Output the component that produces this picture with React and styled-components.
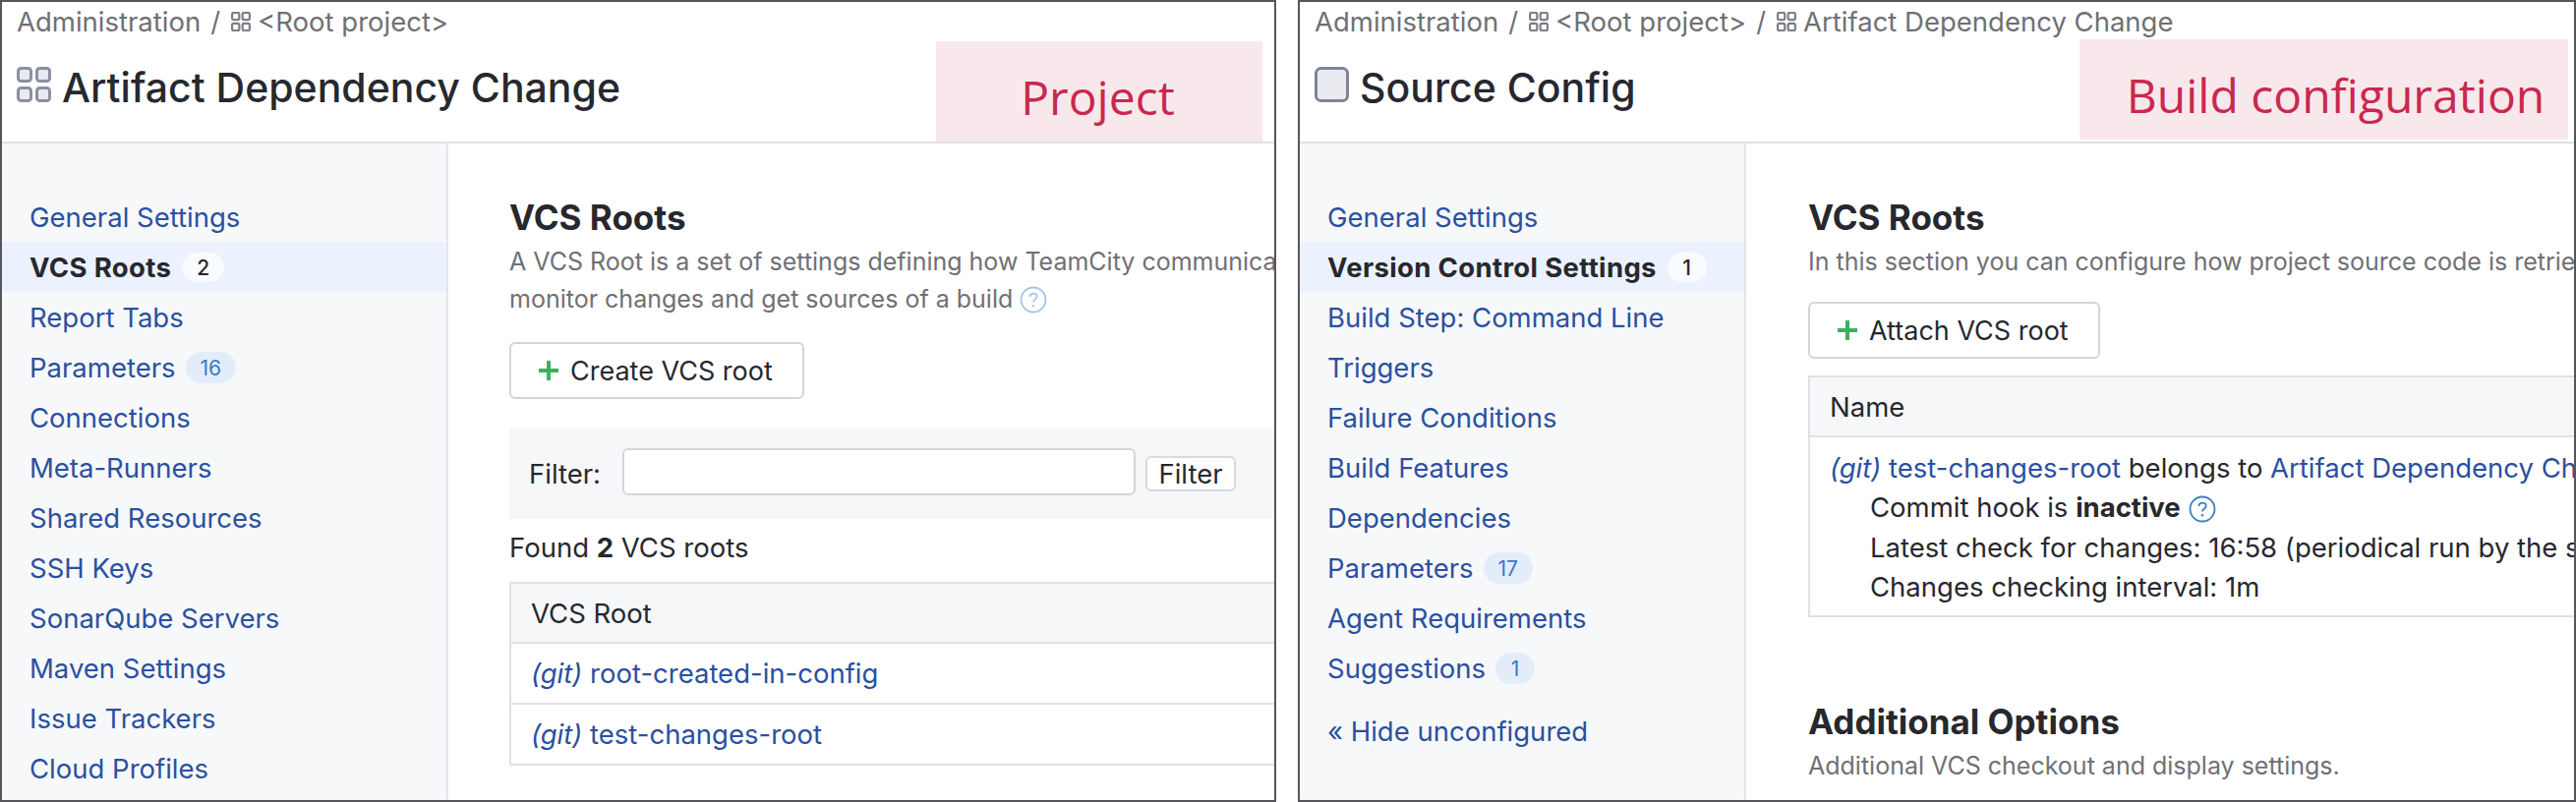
import React from 'react';
import styled, { createGlobalStyle } from 'styled-components';

const GlobalStyle = createGlobalStyle`
    html, body {
        margin: 0;
        padding: 0;
        background: #fff;
    }
    body {
        font-family: Inter, "Liberation Sans", sans-serif;
        font-size: 27.5px;
        color: #27282e;
    }
`;

const Page = styled.div`
    display: flex;
    gap: 22px;
    width: 2620px;
    height: 816px;
    overflow: hidden;
`;

const Frame = styled.section`
    display: flex;
    flex-direction: column;
    box-sizing: border-box;
    width: ${({ $width }) => $width}px;
    height: 816px;
    border: 2px solid #55565a;
    overflow: hidden;
    white-space: nowrap;
`;

const Header = styled.header`
    position: relative;
    box-sizing: border-box;
    flex: none;
    height: 144px;
    padding: 0 15px;
    border-bottom: 2px solid #e0e1e7;
`;

const Crumbs = styled.nav`
    display: flex;
    align-items: center;
    height: 40px;
    color: #6f7074;
`;

const CrumbSep = styled.span`
    margin: 0 11px 0 10px;
`;

const CrumbIcon = styled.svg`
    flex: none;
    width: 20px;
    height: 20px;
    margin-right: 7px;
`;

const TitleRow = styled.div`
    display: flex;
    align-items: center;
    gap: 11px;
    height: 40px;
    margin-top: 24px;
`;

const TitleIcon = styled.svg`
    flex: none;
    width: 35px;
    height: 36px;
`;

const Title = styled.h1`
    margin: 0;
    padding-top: 5px;
    font-size: 41px;
    line-height: 40px;
    font-weight: 500;
    color: #27282e;
`;

const Tag = styled.div`
    position: absolute;
    top: ${({ $top }) => $top}px;
    right: ${({ $right }) => $right}px;
    display: flex;
    align-items: center;
    justify-content: center;
    box-sizing: border-box;
    width: ${({ $width }) => $width}px;
    height: 102px;
    padding: 10px 3px 0 ${({ $inset }) => $inset || 0}px;
    background: #f8e8ec;
    color: #c9284e;
    font-family: "Open Sans", "Noto Sans", sans-serif;
    font-size: 48px;
`;

const Body = styled.div`
    display: flex;
    flex: 1;
    min-height: 0;
`;

const Sidebar = styled.aside`
    flex: none;
    box-sizing: border-box;
    width: 454px;
    padding-top: 49px;
    background: #f7f8fa;
    border-right: 2px solid #e4e5e9;
`;

const SideItem = styled.div`
    display: flex;
    align-items: center;
    gap: ${({ $active }) => ($active ? 11 : 10)}px;
    box-sizing: border-box;
    height: 51px;
    padding: 1px 0 0 28px;
    color: ${({ $active }) => ($active ? '#27282e' : '#2a50a0')};
    font-weight: ${({ $active }) => ($active ? 700 : 400)};
    letter-spacing: ${({ $active }) => ($active ? '0.35px' : '0')};
    background: ${({ $active }) => ($active ? '#ebf2fe' : 'transparent')};
    margin-top: ${({ $spaced }) => ($spaced ? '13px' : '0')};
`;

const Count = styled.span`
    display: inline-flex;
    align-items: center;
    justify-content: center;
    box-sizing: border-box;
    min-width: 40px;
    height: ${({ $active }) => ($active ? 30 : 32)}px;
    padding: 0 15px;
    border-radius: 16px;
    font-size: 21px;
    font-weight: ${({ $active }) => ($active ? 500 : 400)};
    color: ${({ $active }) => ($active ? '#27282e' : '#3a78c8')};
    background: ${({ $active }) => ($active ? '#f9fbff' : '#e3edfa')};
`;

const Main = styled.main`
    flex: 1;
    min-width: 0;
    padding-left: ${({ $inset }) => $inset}px;
    overflow: hidden;
`;

const Heading = styled.h2`
    margin: ${({ $top }) => $top}px 0 0;
    font-size: 35px;
    line-height: 40px;
    font-weight: 700;
    color: #27282e;
`;

const Note = styled.p`
    margin: 6px 0 0;
    font-size: 25px;
    line-height: 38px;
    color: #6f7074;
`;

const HelpIcon = styled.svg`
    width: 28px;
    height: 28px;
    margin-left: ${({ $gap }) => $gap}px;
    vertical-align: -6px;
`;

const AddButton = styled.div`
    display: inline-flex;
    align-items: center;
    gap: 12px;
    box-sizing: border-box;
    height: 58px;
    margin-top: ${({ $top }) => $top}px;
    padding: 0 30px 0 28px;
    border: 2px solid #d4d5da;
    border-radius: 6px;
    background: #fff;
`;

const ButtonLabel = styled.span`
    font-size: 27px;
`;

const PlusIcon = styled.svg`
    width: 20px;
    height: 20px;
`;

const FilterBar = styled.div`
    display: flex;
    align-items: center;
    height: 93px;
    margin-top: 29px;
    padding-left: 20px;
    background: #f6f7f9;
`;

const FilterLabel = styled.span`
    width: 95px;
`;

const FilterInput = styled.div`
    box-sizing: border-box;
    width: 522px;
    height: 48px;
    margin-bottom: 3px;
    border: 2px solid #d4d5da;
    border-radius: 6px;
    background: #fff;
`;

const FilterButton = styled.div`
    display: flex;
    align-items: center;
    justify-content: center;
    box-sizing: border-box;
    width: 92px;
    height: 36px;
    margin-left: 10px;
    border: 2px solid #d8d9de;
    border-radius: 6px;
    background: #fff;
`;

const Found = styled.p`
    margin: 10px 0 0;
    line-height: 38px;
`;

const Table = styled.div`
    box-sizing: border-box;
    margin-top: ${({ $top }) => $top}px;
    border: 2px solid #e0e1e6;
    border-right: none;
`;

const TableHead = styled.div`
    display: flex;
    align-items: center;
    height: 59px;
    padding-left: 20px;
    background: #f6f7f9;
`;

const TableRow = styled.div`
    display: flex;
    align-items: center;
    height: 60px;
    padding-left: 20px;
    border-top: 2px solid #e0e1e6;
`;

const RootCell = styled.div`
    padding: 11px 0 9px 20px;
    border-top: 2px solid #e0e1e6;
    line-height: 40px;
`;

const RootLine = styled.div`
    height: 40px;
    padding-left: ${({ $indent }) => ($indent ? 41 : 0)}px;
    margin-bottom: ${({ $after }) => $after || 0}px;
`;

const Link = styled.span`
    color: #2a50a0;
`;

const Kind = styled.i`
    color: #2a50a0;
`;

const ProjectGlyph = ({ stroke = '#8b90a0', fill = '#e8eaf0', width = 3 }) => (
    <>
        <rect x="1.5" y="1.5" width="13" height="13" rx="3" fill={fill} stroke={stroke} strokeWidth={width} />
        <rect x="20.5" y="1.5" width="13" height="13" rx="3" fill={fill} stroke={stroke} strokeWidth={width} />
        <rect x="1.5" y="21.5" width="13" height="13" rx="3" fill={fill} stroke={stroke} strokeWidth={width} />
        <rect x="20.5" y="21.5" width="13" height="13" rx="3" fill={fill} stroke={stroke} strokeWidth={width} />
    </>
);

const CrumbProject = () => (
    <CrumbIcon viewBox="0 0 35 36">
        <ProjectGlyph stroke="#7d7f86" fill="#fff" width={4} />
    </CrumbIcon>
);

const Plus = () => (
    <PlusIcon viewBox="0 0 20 20">
        <path d="M10 0v20M0 10h20" stroke="#3bb15c" strokeWidth="4" fill="none" />
    </PlusIcon>
);

const Help = ({ color, gap }) => (
    <HelpIcon viewBox="0 0 28 28" $gap={gap}>
        <circle cx="14" cy="14" r="12.5" fill="none" stroke={color} strokeWidth="1.8" />
        <path
            d="M10.4 11c.2-2.2 1.7-3.4 3.7-3.4 2.1 0 3.6 1.3 3.6 3.1 0 1.5-.9 2.3-2 3-1.1.7-1.7 1.3-1.7 2.7"
            fill="none"
            stroke={color}
            strokeWidth="1.8"
        />
        <circle cx="14" cy="20.3" r="1.2" fill={color} />
    </HelpIcon>
);

const SideNav = ({ items }) => (
    <Sidebar>
        {items.map((item) => (
            <SideItem key={item.label} $active={item.active} $spaced={item.spaced}>
                {item.label}
                {item.count && <Count $active={item.active}>{item.count}</Count>}
            </SideItem>
        ))}
    </Sidebar>
);

const projectNav = [
    { label: 'General Settings' },
    { label: 'VCS Roots', active: true, count: '2' },
    { label: 'Report Tabs' },
    { label: 'Parameters', count: '16' },
    { label: 'Connections' },
    { label: 'Meta-Runners' },
    { label: 'Shared Resources' },
    { label: 'SSH Keys' },
    { label: 'SonarQube Servers' },
    { label: 'Maven Settings' },
    { label: 'Issue Trackers' },
    { label: 'Cloud Profiles' },
];

const buildNav = [
    { label: 'General Settings' },
    { label: 'Version Control Settings', active: true, count: '1' },
    { label: 'Build Step: Command Line' },
    { label: 'Triggers' },
    { label: 'Failure Conditions' },
    { label: 'Build Features' },
    { label: 'Dependencies' },
    { label: 'Parameters', count: '17' },
    { label: 'Agent Requirements' },
    { label: 'Suggestions', count: '1' },
    { label: '« Hide unconfigured', spaced: true },
];

const App = () => (
    <Page>
        <GlobalStyle />
        <Frame $width={1298}>
            <Header>
                <Crumbs>
                    Administration
                    <CrumbSep>/</CrumbSep>
                    <CrumbProject />
                    &lt;Root project&gt;
                </Crumbs>
                <TitleRow>
                    <TitleIcon viewBox="0 0 35 36">
                        <ProjectGlyph />
                    </TitleIcon>
                    <Title>Artifact Dependency Change</Title>
                </TitleRow>
                <Tag $top={40} $right={12} $width={332}>Project</Tag>
            </Header>
            <Body>
                <SideNav items={projectNav} />
                <Main $inset={62}>
                    <Heading $top={55}>VCS Roots</Heading>
                    <Note>
                        A VCS Root is a set of settings defining how TeamCity communicates with a version control system to
                        <br />
                        monitor changes and get sources of a build
                        <Help color="#a3c6e8" gap={7} />
                    </Note>
                    <AddButton $top={25}>
                        <Plus />
                        <ButtonLabel>Create VCS root</ButtonLabel>
                    </AddButton>
                    <FilterBar>
                        <FilterLabel>Filter:</FilterLabel>
                        <FilterInput />
                        <FilterButton>Filter</FilterButton>
                    </FilterBar>
                    <Found>
                        Found <b>2</b> VCS roots
                    </Found>
                    <Table $top={16}>
                        <TableHead>VCS Root</TableHead>
                        <TableRow>
                            <Kind>(git)</Kind>&nbsp;<Link>root-created-in-config</Link>
                        </TableRow>
                        <TableRow>
                            <Kind>(git)</Kind>&nbsp;<Link>test-changes-root</Link>
                        </TableRow>
                    </Table>
                </Main>
            </Body>
        </Frame>
        <Frame $width={1300}>
            <Header>
                <Crumbs>
                    Administration
                    <CrumbSep>/</CrumbSep>
                    <CrumbProject />
                    &lt;Root project&gt;
                    <CrumbSep>/</CrumbSep>
                    <CrumbProject />
                    Artifact Dependency Change
                </Crumbs>
                <TitleRow>
                    <TitleIcon viewBox="0 0 35 36">
                        <rect x="1.5" y="1.5" width="32" height="33" rx="5" fill="#e9ebf0" stroke="#7f8496" strokeWidth="3" />
                    </TitleIcon>
                    <Title>Source Config</Title>
                </TitleRow>
                <Tag $top={38} $right={6} $width={497} $inset={27}>Build configuration</Tag>
            </Header>
            <Body>
                <SideNav items={buildNav} />
                <Main $inset={63}>
                    <Heading $top={55}>VCS Roots</Heading>
                    <Note>In this section you can configure how project source code is retrieved from the version control</Note>
                    <AddButton $top={22}>
                        <Plus />
                        <ButtonLabel>Attach VCS root</ButtonLabel>
                    </AddButton>
                    <Table $top={17}>
                        <TableHead>Name</TableHead>
                        <RootCell>
                            <RootLine>
                                <Kind>(git)</Kind> <Link>test-changes-root</Link> belongs to <Link>Artifact Dependency Change</Link>
                            </RootLine>
                            <RootLine $indent $after={1}>
                                Commit hook is <b>inactive</b>
                                <Help color="#3c7fc0" gap={8} />
                            </RootLine>
                            <RootLine $indent>Latest check for changes: 16:58 (periodical run by the server)</RootLine>
                            <RootLine $indent>Changes checking interval: 1m</RootLine>
                        </RootCell>
                    </Table>
                    <Heading $top={86}>Additional Options</Heading>
                    <Note>Additional VCS checkout and display settings.</Note>
                </Main>
            </Body>
        </Frame>
    </Page>
);

export default App;
